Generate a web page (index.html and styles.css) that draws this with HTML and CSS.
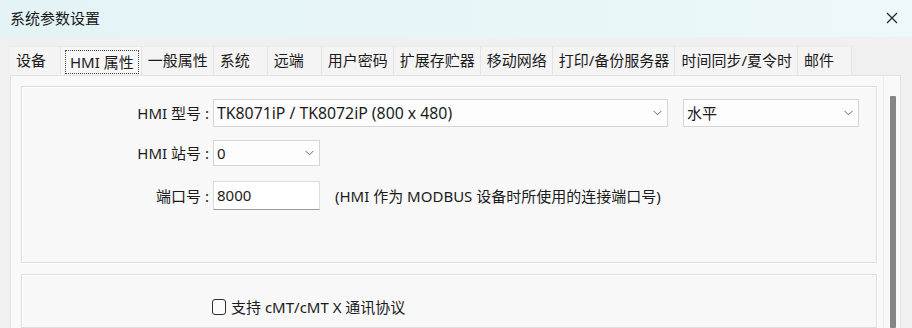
FILE: index.html
```html
<!DOCTYPE html>
<html lang="zh-CN">
<head>
<meta charset="utf-8">
<title>系统参数设置</title>
<link rel="stylesheet" href="styles.css">
</head>
<body>
<div class="window">
  <div class="titlebar">
    <span class="title">系统参数设置</span>
    <svg class="close" width="12" height="12" viewBox="0 0 12 12"><path d="M1 1 L11 11 M11 1 L1 11" stroke="#222" stroke-width="1.2" fill="none"/></svg>
  </div>
  <div class="main">
    <div class="tabs">
      <div class="tab first">设备</div>
      <div class="tab active"><span class="focus">HMI 属性</span></div>
      <div class="tab">一般属性</div>
      <div class="tab">系统</div>
      <div class="tab">远端</div>
      <div class="tab">用户密码</div>
      <div class="tab">扩展存贮器</div>
      <div class="tab">移动网络</div>
      <div class="tab">打印/备份服务器</div>
      <div class="tab">时间同步/夏令时</div>
      <div class="tab">邮件</div>
    </div>
    <div class="panel">
      <div class="content">
        <div class="group g1">
          <div class="row r1">
            <span class="lbl">HMI 型号 :</span>
            <div class="combo model"><span class="model-text">TK8071iP / TK8072iP (800 x 480)</span><svg class="chev" width="9" height="6" viewBox="0 0 9 6"><path d="M0.5 0.8 L4.5 4.8 L8.5 0.8" stroke="#6a6a6a" stroke-width="1" fill="none"/></svg></div>
            <div class="combo orient"><span>水平</span><svg class="chev" width="9" height="6" viewBox="0 0 9 6"><path d="M0.5 0.8 L4.5 4.8 L8.5 0.8" stroke="#6a6a6a" stroke-width="1" fill="none"/></svg></div>
          </div>
          <div class="row r2">
            <span class="lbl">HMI 站号 :</span>
            <div class="combo small"><span>0</span><svg class="chev" width="9" height="6" viewBox="0 0 9 6"><path d="M0.5 0.8 L4.5 4.8 L8.5 0.8" stroke="#6a6a6a" stroke-width="1" fill="none"/></svg></div>
          </div>
          <div class="row r3">
            <span class="lbl">端口号 :</span>
            <div class="input">8000</div>
            <span class="note">(HMI 作为 MODBUS 设备时所使用的连接端口号)</span>
          </div>
        </div>
        <div class="group g2">
          <label class="check"><span class="box"></span><span class="check-text">支持 cMT/cMT X 通讯协议</span></label>
        </div>
      </div>
      <div class="scrollbar"><div class="thumb"></div></div>
    </div>
  </div>
</div>
</body>
</html>
```

FILE: styles.css
```css
* { box-sizing: border-box; }
html, body {
  margin: 0;
  padding: 0;
  width: 912px;
  height: 328px;
  overflow: hidden;
}
body {
  font-family: "Noto Sans", "Noto Sans CJK SC", sans-serif;
  font-size: 15px;
  color: #1b1b1b;
  background: #efefef;
}
.window {
  width: 912px;
  height: 328px;
  display: flex;
  flex-direction: column;
}
.titlebar {
  height: 37px;
  flex: none;
  display: flex;
  align-items: center;
  justify-content: space-between;
  padding: 0 14px 0 10px;
  background: linear-gradient(90deg, #e3f3f6 0%, #e8f6f8 60%, #edf8fa 100%);
}
.title {
  font-size: 15px;
  line-height: 20px;
  color: #1a1a1a;
  margin-top: -2px;
}
.close { margin-top: -2px; }
.main {
  flex: 1;
  display: flex;
  flex-direction: column;
  padding-top: 9px;
  background: #f0f0f0;
}
.tabs {
  height: 29px;
  display: flex;
  margin-left: 10px;
  flex: none;
}
.tab {
  height: 29px;
  display: flex;
  align-items: center;
  padding: 0 5px 2px 6px;
  min-width: 54px;
  background: #f4f4f4;
  border-top: 1px solid #ebebeb;
  border-right: 1px solid #e4e4e4;
  line-height: 20px;
  white-space: nowrap;
}
.tab.first { min-width: 51px; }
.tab.active {
  padding: 3px 2px 1px 4px;
  background: #f7f7f7;
  border-top-color: #e6e6e6;
}
.focus {
  height: 100%;
  display: flex;
  align-items: center;
  padding: 0 4px 1px 4px;
  border: 1px dotted #4a4a4a;
}
.panel {
  flex: 1;
  margin-left: 10px;
  width: 891px;
  display: flex;
  background: #f9f9f9;
  border: 1px solid #e2e2e2;
  border-bottom: none;
}
.content {
  flex: 1;
  padding: 10px 6px 0 10px;
  display: flex;
  flex-direction: column;
  gap: 11px;
}
.group {
  border: 1px solid #dedede;
  box-shadow: inset 1px 1px 0 #ffffff, 1px 1px 0 #ffffff;
  background: #f8f8f8;
}
.g1 {
  height: 177px;
  padding: 12px 0 0 0;
  display: flex;
  flex-direction: column;
  gap: 13px;
}
.g2 {
  flex: 1;
  padding: 22px 0 0 190px;
}
.row {
  display: flex;
  align-items: center;
  gap: 0;
}
.r3 { margin-top: 2px; }
.lbl {
  width: 191px;
  text-align: right;
  padding-right: 4px;
  line-height: 20px;
  white-space: nowrap;
}
.combo {
  display: flex;
  align-items: center;
  justify-content: space-between;
  background: #fdfdfd;
  border: 1px solid #d6d6d6;
  padding: 0 5px 0 3px;
  line-height: 20px;
  white-space: nowrap;
}
.model-text { font-size: 15.8px; }
.combo.model { width: 455px; height: 28px; }
.combo.orient { width: 176px; height: 28px; margin-left: 15px; }
.combo.small { width: 107px; height: 26px; }
.chev { flex: none; }
.input {
  width: 107px;
  height: 29px;
  display: flex;
  align-items: center;
  padding: 0 4px 1px 3px;
  background: #ffffff;
  border: 1px solid #dcdcdc;
  border-bottom-color: #9a9a9a;
  line-height: 20px;
}
.note {
  margin-left: 15px;
  line-height: 20px;
  white-space: nowrap;
}
.check {
  display: flex;
  align-items: center;
  gap: 5px;
  line-height: 20px;
}
.box {
  width: 14px;
  height: 16px;
  border: 1px solid #303030;
  border-radius: 3px;
  background: #fbfbfb;
}
.scrollbar {
  width: 17px;
  flex: none;
  padding: 20px 5px 0 6px;
  border-left: 1px solid #ececec;
  background: #f9f9f9;
}
.thumb {
  width: 6px;
  height: 100%;
  background: #858585;
  border-radius: 1px;
}
```
